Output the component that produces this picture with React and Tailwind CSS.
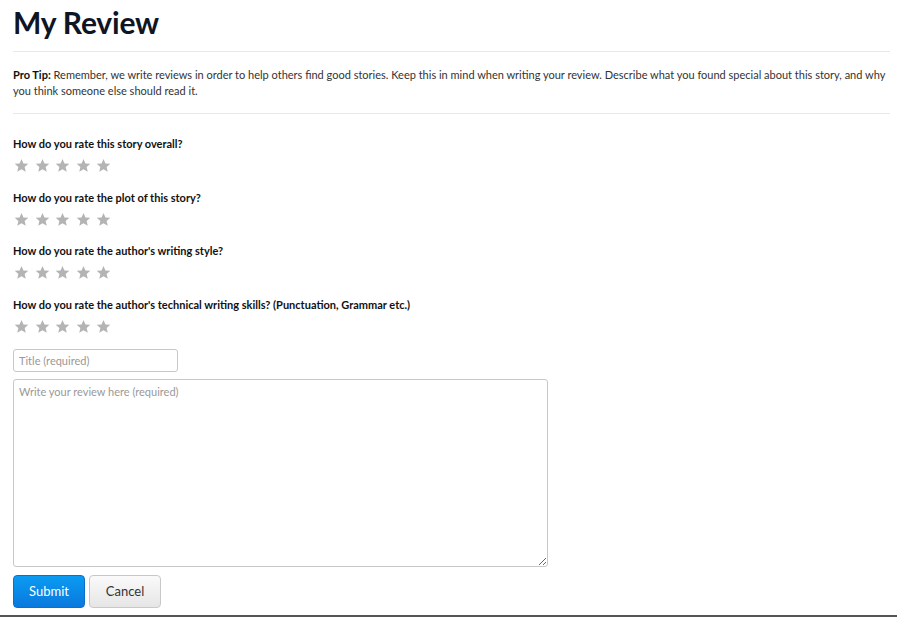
import React from 'react';

const questions = [
    "How do you rate this story overall?",
    "How do you rate the plot of this story?",
    "How do you rate the author's writing style?",
    "How do you rate the author's technical writing skills? (Punctuation, Grammar etc.)",
];

const Star = () => (
    <svg width="15" height="15" viewBox="0 0 24 24" className="fill-[#b4b4b4]">
        <path d="M12 1.5l3.1 7.2 7.8.6-5.9 5.1 1.8 7.6L12 18l-6.8 4 1.8-7.6-5.9-5.1 7.8-.6z" />
    </svg>
);

const Stars = () => (
    <div className="flex gap-[5.5px] pl-[1px] mt-[6px]">
        {[0, 1, 2, 3, 4].map(i => <Star key={i} />)}
    </div>
);

export default function App() {
    return (
        <div className="w-[910px] h-[628px] bg-white overflow-hidden font-['Lato',sans-serif] text-[#222]">
            <div className="pl-[13px] pr-[20px]">
                <h1 className="text-[30px] leading-[36px] font-bold text-[#0f1523] pt-[4px] tracking-[-0.2px]">My Review</h1>
                <div className="border-t border-[#e8e8e8] mt-[11px]" />
                <p className="text-[11px] leading-[16px] text-[#333] pt-[15px] pb-[14px] pr-[4px]">
                    <b className="font-bold text-[#111]">Pro Tip:</b> Remember, we write reviews in order to help others find good stories. Keep this in mind when writing your review. Describe what you found special about this story, and why you think someone else should read it.
                </p>
                <div className="border-t border-[#e8e8e8]" />

                <div className="pt-[22px]">
                    {questions.map(q => (
                        <div key={q} className="h-[53.5px]">
                            <div className="text-[11px] leading-[16px] font-bold text-[#111]">{q}</div>
                            <Stars />
                        </div>
                    ))}
                </div>

                <div className="mt-[-1px] flex flex-col items-start">
                    <input
                        placeholder="Title (required)"
                        className="w-[165px] h-[23px] border border-[#c8c8c8] rounded-[3px] px-[5px] text-[11px] placeholder:text-[#999] outline-none"
                    />
                    <textarea
                        placeholder="Write your review here (required)"
                        className="mt-[7px] w-[535px] h-[188px] border border-[#c8c8c8] rounded-[3px] px-[5px] py-[4px] text-[11px] placeholder:text-[#999] outline-none resize"
                    />
                    <div className="flex gap-[4px] mt-[8px]">
                        <button className="w-[72px] h-[33px] rounded-[4px] bg-gradient-to-b from-[#0c9bf2] to-[#0a79dd] border border-[#0a70cc] text-white text-[13px]">Submit</button>
                        <button className="w-[72px] h-[33px] rounded-[4px] bg-gradient-to-b from-[#fafafa] to-[#e6e6e6] border border-[#c8c8c8] text-[#333] text-[13px]">Cancel</button>
                    </div>
                </div>
            </div>
            <div className="mt-[7px] w-[897px] border-t-2 border-[#555]" />
        </div>
    );
}
